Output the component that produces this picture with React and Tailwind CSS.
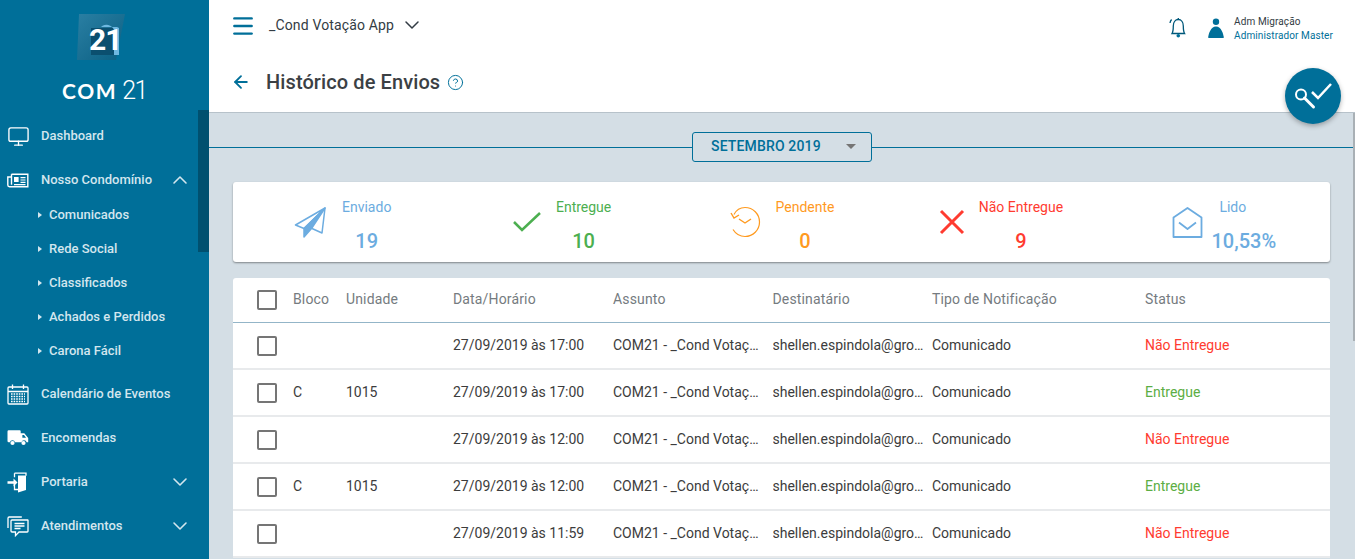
import { ChevronDown, ChevronUp, Menu, ArrowLeft, CircleHelp, Monitor } from 'lucide-react'

const subItems = ['Comunicados', 'Rede Social', 'Classificados', 'Achados e Perdidos', 'Carona Fácil']

const rows = [
  { bloco: '', unidade: '', data: '27/09/2019 às 17:00', status: 'Não Entregue' },
  { bloco: 'C', unidade: '1015', data: '27/09/2019 às 17:00', status: 'Entregue' },
  { bloco: '', unidade: '', data: '27/09/2019 às 12:00', status: 'Não Entregue' },
  { bloco: 'C', unidade: '1015', data: '27/09/2019 às 12:00', status: 'Entregue' },
  { bloco: '', unidade: '', data: '27/09/2019 às 11:59', status: 'Não Entregue' },
]

function NewsIcon() {
  return (
    <svg width="22" height="15" viewBox="0 0 22 15" fill="none" stroke="white" strokeWidth="1.4">
      <path d="M4.5 1.2h16.3v12.6H2.5a1.7 1.7 0 0 1-1.7-1.7V4h3.7" />
      <path d="M4.5 1.2v10.5" />
      <rect x="7" y="4" width="4.6" height="5" fill="white" stroke="none" />
      <path d="M13.5 4.6h5M13.5 7h5M13.5 9.4h5M7 11.6h11.5" strokeWidth="1.2" />
    </svg>
  )
}

function CalendarIcon() {
  return (
    <svg width="22" height="21" viewBox="0 0 22 21" fill="none" stroke="white" strokeWidth="1.3">
      <rect x="1" y="3" width="20" height="17" rx="1" />
      <path d="M1 7.5h20M5.5 0.5v4.5M16.5 0.5v4.5" />
      <path d="M4 10h14M4 12.5h14M4 15h14M4 17.5h14" strokeDasharray="1.6 1" strokeWidth="1.5" />
    </svg>
  )
}

function TruckIcon() {
  return (
    <svg width="22" height="16" viewBox="0 0 22 16" fill="white">
      <path d="M0.5 1.5A1.2 1.2 0 0 1 1.7 0.3h11a1 1 0 0 1 1 1v2h3.6l3.9 4.6v4.4h-1.6a2.6 2.6 0 0 0-5.1 0H8a2.6 2.6 0 0 0-5.1 0H1.700a1.2 1.2 0 0 1-1.2-1.2z" />
      <circle cx="5.5" cy="13" r="2.1" />
      <circle cx="16.5" cy="13" r="2.1" />
      <path d="M15.4 5v2.8h3.7L17 5z" fill="#006f99" />
    </svg>
  )
}

function DoorIcon() {
  return (
    <svg width="20" height="21" viewBox="0 0 20 21" fill="none">
      <path d="M11 3.5h8V18l-8 2.5z" fill="white" />
      <path d="M10.5 1.2h8.5v2.5M7.5 1.2h3M7.5 1.2v4M7.5 13v4.5h3.5" stroke="white" strokeWidth="1.3" />
      <path d="M0.5 9.2h6V6.6l4 3.9-4 3.9v-2.6h-6z" fill="white" />
    </svg>
  )
}

function ChatIcon() {
  return (
    <svg width="22" height="21" viewBox="0 0 22 21" fill="none" stroke="white" strokeWidth="1.3">
      <path d="M1 12V2.2A1.2 1.2 0 0 1 2.2 1h12.6" />
      <path d="M5 4h15.8A0.8 0.8 0 0 1 21 4.8v10.4a0.8 0.8 0 0 1-.8.8H12l-3.5 3.6V16H5a1 1 0 0 1-1-1V5a1 1 0 0 1 1-1z" />
      <path d="M7.5 7.5h10M7.5 10h10M7.5 12.5h6" />
    </svg>
  )
}

function NavItem({ icon, label, chevron }) {
  return (
    <div className="flex h-11 items-center pl-[7px] pr-[17px]">
      <div className="flex w-[34px] shrink-0 items-center">{icon}</div>
      <span className="flex-1 text-[13px] font-medium text-[#d3e6ee]">{label}</span>
      {chevron === 'up' && <ChevronUp size={24} strokeWidth={1.6} className="text-[#d3e6ee]" />}
      {chevron === 'down' && <ChevronDown size={24} strokeWidth={1.6} className="text-[#d3e6ee]" />}
    </div>
  )
}

function Sidebar() {
  return (
    <aside className="relative w-[209px] shrink-0 overflow-hidden bg-[#006f99]">
      {/* scrollbar */}
      <div className="absolute right-0 top-[110px] h-[142px] w-[11px] bg-[#00506f]" />

      <div className="flex h-[114px] flex-col items-center pt-[13px]">
        <div className="relative mr-[7px] h-[48px] w-[48px]">
          <svg width="48" height="48" viewBox="0 0 48 48" className="absolute inset-0">
            <defs>
              <linearGradient id="logoBg" x1="0" y1="0" x2="1" y2="1">
                <stop offset="0" stopColor="#2a7fa3" />
                <stop offset="1" stopColor="#0a5f82" />
              </linearGradient>
            </defs>
            <path d="M2 1h46l-9 46H12L0 47z" fill="url(#logoBg)" />
            <rect x="14" y="15" width="26" height="27" fill="#0b4f6f" />
            <path d="M24 14a8 8 0 0 1 13 3v25h5V15l-2-1z" fill="#6fb8e0" />
          </svg>
          <span className="absolute left-[12px] top-[9px] font-['Roboto',sans-serif] text-[30px] font-bold leading-[36px] tracking-[-1px] text-white">
            21
          </span>
        </div>
        <div className="mt-[18px] flex items-baseline text-white">
          <span className="font-['Lato',sans-serif] text-[21px] font-bold leading-[24px] tracking-[1.6px]">COM</span>
          <span className="ml-[5px] font-['Roboto',sans-serif] text-[25px] font-light leading-[24px] tracking-[-1.5px]">21</span>
        </div>
      </div>

      <NavItem icon={<Monitor size={23} strokeWidth={1.4} className="text-white" />} label="Dashboard" />
      <NavItem icon={<NewsIcon />} label="Nosso Condomínio" chevron="up" />
      <div className="-mt-1 mb-1">
        {subItems.map((s) => (
          <div key={s} className="flex h-[34px] items-center pl-[38px]">
            <span className="mr-[7px] h-0 w-0 border-y-[3px] border-l-[4px] border-y-transparent border-l-[#d3e6ee]" />
            <span className="text-[13px] font-medium text-[#d3e6ee]">{s}</span>
          </div>
        ))}
      </div>
      <NavItem icon={<CalendarIcon />} label="Calendário de Eventos" />
      <NavItem icon={<TruckIcon />} label="Encomendas" />
      <NavItem icon={<DoorIcon />} label="Portaria" chevron="down" />
      <NavItem icon={<ChatIcon />} label="Atendimentos" chevron="down" />
    </aside>
  )
}

function Header() {
  return (
    <header className="h-[113px] shrink-0 border-b border-[#b7c2ca] bg-white">
      <div className="flex h-[50px] items-center pl-[21px] pr-[22px]">
        <Menu size={26} strokeWidth={2.2} className="mt-[2px] text-[#006f99]" />
        <span className="ml-[13px] text-[14px] font-normal tracking-[0.15px] text-[#333c44]">_Cond Votação App</span>
        <ChevronDown size={24} strokeWidth={1.5} className="ml-[6px] text-[#333c44]" />
        <div className="ml-auto flex items-center pt-[6px]">
          <svg width="18" height="22" viewBox="0 0 18 22" fill="none" stroke="#00587a" strokeWidth="1.3">
            <path d="M3 16.5c1-1.500 1.300-3.500 1.300-7.500 0-3.800 2-6.500 5-6.500s5 2.700 5 6.500c0 4 .3 6 1.300 7.500z" />
            <path d="M9.300 1v1.500" />
            <circle cx="9.300" cy="18.800" r="1.800" fill="#006f99" stroke="none" />
            <path d="M2.600 2.500C1.700 3.600 1.200 4.700 1 6" />
          </svg>
          <svg width="16" height="21" viewBox="0 0 16 21" fill="#006f99" className="ml-[21px]">
            <circle cx="8" cy="3.700" r="3.200" />
            <path d="M1 20c-.6 0-.9-.5-.8-1 .6-3 2.300-10.500 7.800-10.500s7.200 7.500 7.800 10.500c.1.500-.2 1-.8 1z" />
          </svg>
          <div className="ml-[10px] mt-[2px] text-[10px] leading-[14px] tracking-[0.1px]">
            <div className="text-[#333c44]">Adm Migração</div>
            <div className="text-[#006f99]">Administrador Master</div>
          </div>
        </div>
      </div>
      <div className="mt-[18px] flex items-center pl-[22px]">
        <ArrowLeft size={20} strokeWidth={2.2} className="text-[#006f99]" />
        <h1 className="ml-[15px] text-[20px] font-medium leading-[28px] tracking-[0.1px] text-[#3b4044]">Histórico de Envios</h1>
        <CircleHelp size={17} strokeWidth={1.4} className="ml-[7px] text-[#006f99]" />
      </div>
    </header>
  )
}

function StatItem({ icon, label, value, color, gap, offset = '', labelClass = '' }) {
  return (
    <div className={`flex items-center justify-center ${gap} ${offset}`}>
      {icon}
      <div className={`flex flex-col items-center pt-[5px] ${color}`}>
        <span className={`text-[14px] leading-[20px] ${labelClass}`}>{label}</span>
        <span className="mt-[12px] text-[20px] font-medium leading-[24px]">{value}</span>
      </div>
    </div>
  )
}

function Stats() {
  return (
    <div className="grid h-[80px] grid-cols-5 rounded-[3px] bg-white shadow-[0_1px_2px_rgba(0,0,0,0.4)]">
      <StatItem
        gap="gap-[16px]"
        color="text-[#6cace0]"
        label="Enviado"
        value="19"
        icon={
          <svg width="32" height="31" viewBox="0 0 32 31" fill="none" stroke="#6cace0" strokeWidth="1.500">
            <path d="M31 1 1.500 18l8.500 3.500L31 1l-3 25-10-4.500" strokeLinejoin="round" />
            <path d="M31 1 10 21.500l0 8.500 7.500-8.500z" fill="#6cace0" strokeLinejoin="round" />
          </svg>
        }
      />
      <StatItem
        gap="gap-[15px]"
        color="text-[#4caf50]"
        label="Entregue"
        value="10"
        icon={
          <svg width="28" height="20" viewBox="0 0 28 20" fill="none" stroke="#4caf50" strokeWidth="2.500">
            <path d="M1 10l8 8L27 1" />
          </svg>
        }
      />
      <StatItem
        gap="gap-[15px]"
        color="text-[#ff9a1f]"
        label="Pendente"
        value="0"
        icon={
          <svg width="32" height="32" viewBox="0 0 32 32" fill="none" stroke="#ff9a1f" strokeWidth="1.200">
            <path d="M5 8.500C7.500 3.500 11.500 1.500 16 1.500a14.500 14.500 0 1 1 0 29c-5 0-9.500-3-12-7" />
            <path d="M2 7l3 5 5-3" strokeWidth="1.400" />
            <path d="M10 13l6 4 6-4" strokeWidth="1.400" />
          </svg>
        }
      />
      <StatItem
        gap="gap-[14px]"
        color="text-[#ff3b30]"
        label="Não Entregue"
        value="9"
        icon={
          <svg width="26" height="26" viewBox="0 0 26 26" fill="none" stroke="#ff3b30" strokeWidth="3">
            <path d="M2 2l22 22M24 2 2 24" />
          </svg>
        }
      />
      <StatItem
        gap="gap-[8px]"
        offset="pl-[8px]"
        labelClass="pr-[22px]"
        color="text-[#6cace0]"
        label="Lido"
        value="10,53%"
        icon={
          <svg width="31" height="31" viewBox="0 0 31 31" fill="none" stroke="#6cace0" strokeWidth="1.800" strokeLinejoin="round">
            <path d="M1.500 10.500 15.500 1l14 9.500V30h-28z" />
            <path d="M7 15.500l8.500 6.500L24 15.500" />
          </svg>
        }
      />
    </div>
  )
}

function Check() {
  return <span className="block h-5 w-5 rounded-[2px] border-2 border-[#757575]" />
}

const gridCols = 'grid grid-cols-[36px_53px_107px_160px_159.5px_159.5px_213px_1fr] items-center pl-[24px]'

function Table() {
  return (
    <div className="mt-[16px] rounded-t-[3px] bg-white text-[14px]">
      <div className={`${gridCols} h-[45px] border-b border-[#93b5c8] tracking-[0.15px] text-[#757b80]`}>
        <Check />
        <span className="-mt-[2px]">Bloco</span>
        <span className="-mt-[2px]">Unidade</span>
        <span className="-mt-[2px]">Data/Horário</span>
        <span className="-mt-[2px]">Assunto</span>
        <span className="-mt-[2px]">Destinatário</span>
        <span className="-mt-[2px]">Tipo de Notificação</span>
        <span className="-mt-[2px]">Status</span>
      </div>
      {rows.map((r, i) => (
        <div key={i} className={`${gridCols} h-[47px] border-b-2 border-[#e8eaec] text-[#3c3c3c]`}>
          <Check />
          <span>{r.bloco}</span>
          <span>{r.unidade}</span>
          <span>{r.data}</span>
          <span className="truncate pr-[8px]">COM21 - _Cond Votação App</span>
          <span className="truncate pr-[5px]">shellen.espindola@groupcom.com.br</span>
          <span>Comunicado</span>
          <span className={r.status === 'Entregue' ? 'text-[#5cae44]' : 'text-[#ff3b30]'}>{r.status}</span>
        </div>
      ))}
    </div>
  )
}

export default function App() {
  return (
    <div className="relative flex h-screen overflow-hidden bg-[#d4dee5] font-['Roboto',sans-serif]">
      <Sidebar />
      <main className="flex min-w-0 flex-1 flex-col">
        <Header />
        <div className="flex-1 overflow-hidden pt-[19px]">
          <div className="flex items-center">
            <div className="h-px flex-1 bg-[#006f99]" />
            <div className="flex h-[30px] w-[180px] items-center rounded-[3px] border border-[#006f99] pb-[2px] pl-[18px] pr-[15px] text-[14px] font-medium tracking-[0.15px] text-[#006f99]">
              <span>SETEMBRO 2019</span>
              <span className="ml-auto h-0 w-0 border-x-[5px] border-t-[5px] border-x-transparent border-t-[#757575]" />
            </div>
            <div className="h-px flex-1 bg-[#006f99]" />
          </div>
          <div className="ml-[24px] mr-[25px] mt-[20px]">
            <Stats />
            <Table />
          </div>
        </div>
      </main>

      {/* floating button */}
      <div className="absolute left-[1285px] top-[68px] flex h-14 w-14 items-center justify-center rounded-full bg-[#006f99] shadow-[0_2px_5px_rgba(0,0,0,0.3)]">
        <svg width="38" height="28" viewBox="0 0 38 28" fill="none" stroke="white">
          <circle cx="7" cy="12.500" r="5" strokeWidth="2" />
          <path d="M10.500 16l9 9" strokeWidth="3" strokeLinecap="round" />
          <path d="M18 10l6 6L37 2" strokeWidth="2.500" />
        </svg>
      </div>

      {/* page scrollbar */}
      <div className="absolute right-0 top-[113px] h-[228px] w-[2px] bg-[#a9b0b5]" />
    </div>
  )
}
